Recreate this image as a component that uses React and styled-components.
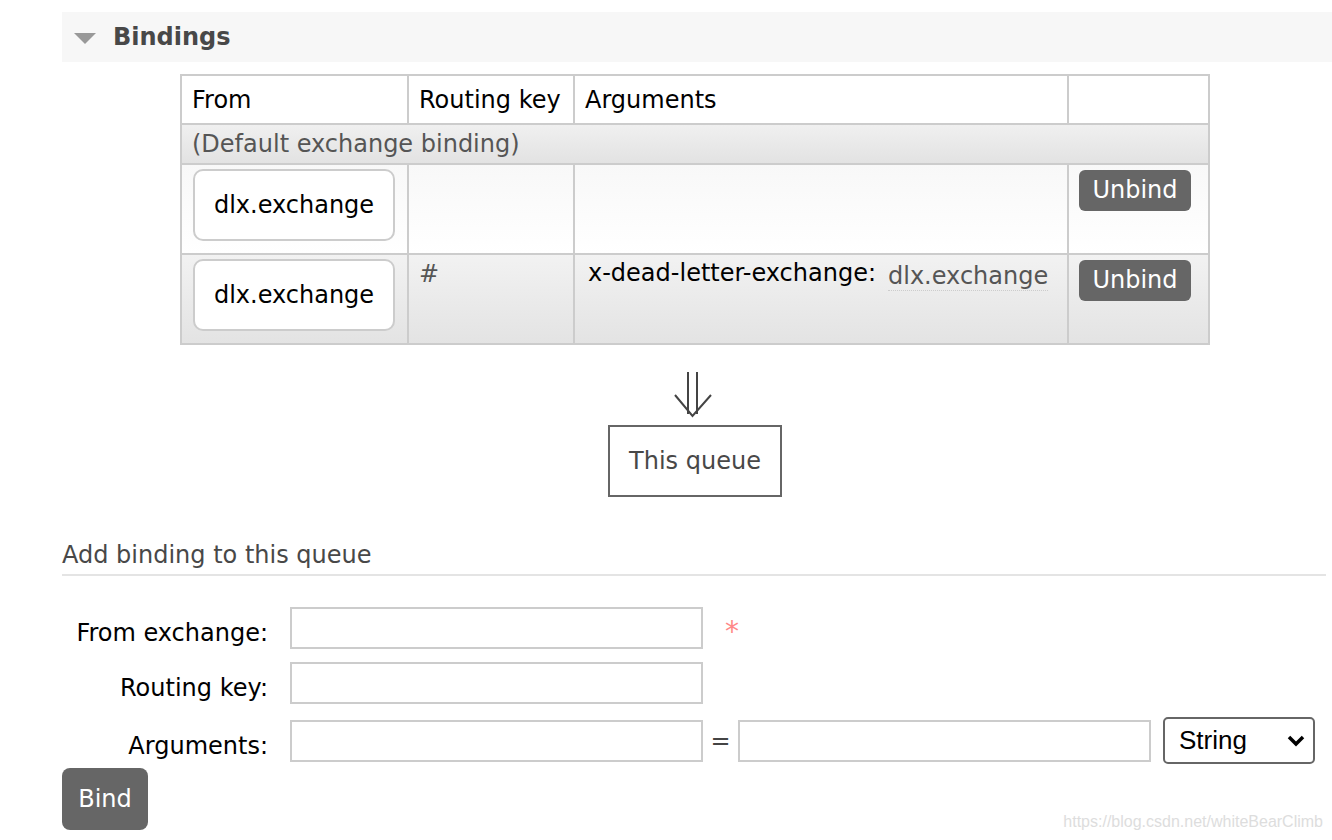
import styled, { createGlobalStyle } from "styled-components";

// global
const GlobalStyle = createGlobalStyle`
  body {
    margin: 0;
    background: #fff;
    font-family: "DejaVu Sans", Verdana, sans-serif;
    color: #000;
  }
`;

// style
const Page = styled.div`
  width: 1332px;
  height: 840px;
  padding: 12px 0 0 62px;
  box-sizing: border-box;
  position: relative;
  overflow: hidden;
`;

const SectionHeader = styled.div`
  height: 50px;
  background: #f7f7f7;
  display: flex;
  align-items: center;
  gap: 17px;
  padding-left: 12px;
  font-size: 24px;
  font-weight: bold;
  color: #484848;
`;

const Triangle = styled.span`
  width: 0;
  height: 0;
  border-left: 11px solid transparent;
  border-right: 11px solid transparent;
  border-top: 11px solid #999;
  margin-top: 2px;
`;

const Diagram = styled.div`
  width: 1030px;
  margin: 12px 0 0 118px;
  display: flex;
  flex-direction: column;
  align-items: center;
`;

const Table = styled.table`
  width: 100%;
  border-collapse: collapse;
  border: 2px solid #ccc;
  font-size: 24px;

  th,
  td {
    border: 2px solid #ccc;
    text-align: left;
    vertical-align: top;
    padding: 4px 10px;
  }

  th {
    font-weight: normal;
    height: 39px;
    vertical-align: middle;
    background: #fff;
  }
`;

const Row = styled.tr`
  background: ${(p) =>
    p.$alt
      ? "linear-gradient(#f2f2f2, #e3e3e3)"
      : "linear-gradient(#f8f8f8, #fff)"};

  td {
    height: 80px;
  }
`;

const DefaultRow = styled.tr`
  background: linear-gradient(#f0f0f0, #e2e2e2);

  td {
    height: 30px;
    padding: 4px 10px;
    color: #555;
    vertical-align: middle;
  }
`;

const ExchangeBox = styled.div`
  width: 198px;
  height: 68px;
  margin-left: 1px;
  border: 2px solid #ccc;
  border-radius: 10px;
  background: #fff;
  display: flex;
  align-items: center;
  justify-content: center;
`;

const Muted = styled.span`
  color: #555;
  display: inline-block;
  padding-top: 1px;
`;

const ArgKey = styled.span`
  display: inline-block;
  padding-left: 3px;
`;

const ArgValue = styled.span`
  color: #555;
  margin-left: 12px;
  border-bottom: 1px dotted #ccc;
  position: relative;
  top: 3px;
`;

const SmallButton = styled.button`
  background: #666;
  color: #fff;
  border: none;
  border-radius: 6px;
  font: inherit;
  font-size: 24px;
  width: 112px;
  height: 41px;
  padding: 0 0 2px;
  margin-top: 1px;
`;

const Arrow = styled.svg`
  margin-top: 27px;
  margin-left: -2px;
  display: block;
`;

const QueueBox = styled.div`
  margin-top: 7px;
  width: 170px;
  height: 68px;
  border: 2px solid #666;
  display: flex;
  align-items: center;
  justify-content: center;
  color: #484848;
  font-size: 24px;
`;

const SubHeading = styled.h3`
  margin: 44px 6px 0 0;
  font-size: 24px;
  font-weight: normal;
  color: #484848;
  padding-bottom: 5px;
  border-bottom: 2px solid #e4e4e4;
`;

const Form = styled.div`
  margin-top: 31px;
  display: grid;
  grid-template-columns: 206px auto;
  column-gap: 22px;
  row-gap: 13px;
  align-items: center;
  font-size: 24px;
`;

const Label = styled.label`
  text-align: right;
  padding-top: 10px;
`;

const Fields = styled.div`
  display: flex;
  align-items: center;
`;

const TextInput = styled.input`
  width: 413px;
  height: 42px;
  box-sizing: border-box;
  border: 2px solid #ccc;
  background: #fff;
  font: inherit;
`;

const Required = styled.span`
  color: #f88;
  margin-left: 22px;
  margin-top: 11px;
  font-size: 28px;
  line-height: 1;
  align-self: flex-start;
`;

const Equals = styled.span`
  color: #444;
  width: 35px;
  text-align: center;
`;

const Select = styled.div`
  margin-left: 12px;
  width: 152px;
  height: 47px;
  box-sizing: border-box;
  border: 2px solid #666;
  border-radius: 5px;
  display: flex;
  align-items: center;
  justify-content: space-between;
  padding: 0 7px 0 14px;
  font-family: "Liberation Sans", Arial, sans-serif;
  font-size: 26px;
`;

const BigButton = styled.button`
  margin-top: 4px;
  background: #666;
  color: #fff;
  border: none;
  border-radius: 8px;
  font: inherit;
  font-size: 24px;
  width: 86px;
  height: 62px;
`;

const Watermark = styled.div`
  position: absolute;
  right: 9px;
  bottom: 9px;
  font-family: "Liberation Sans", Arial, sans-serif;
  font-size: 16px;
  color: #ddd;
`;

const App = () => {
  const bindings = [
    { from: "dlx.exchange", key: "", args: null },
    { from: "dlx.exchange", key: "#", args: ["x-dead-letter-exchange:", "dlx.exchange"] },
  ];

  return (
    <>
      <GlobalStyle />
      <Page>
        {/* Bindings */}
        <SectionHeader>
          <Triangle />
          Bindings
        </SectionHeader>

        <Diagram>
          <Table>
            <colgroup>
              <col style={{ width: "227px" }} />
              <col style={{ width: "166px" }} />
              <col style={{ width: "494px" }} />
              <col />
            </colgroup>
            <thead>
              <tr>
                <th>From</th>
                <th>Routing key</th>
                <th>Arguments</th>
                <th></th>
              </tr>
            </thead>
            <tbody>
              <DefaultRow>
                <td colSpan={4}>(Default exchange binding)</td>
              </DefaultRow>
              {bindings.map((b, i) => (
                <Row key={i} $alt={i % 2 === 1}>
                  <td>
                    <ExchangeBox>{b.from}</ExchangeBox>
                  </td>
                  <td>
                    <Muted>{b.key}</Muted>
                  </td>
                  <td>
                    {b.args && (
                      <ArgKey>
                        {b.args[0]}
                        <ArgValue>{b.args[1]}</ArgValue>
                      </ArgKey>
                    )}
                  </td>
                  <td>
                    <SmallButton>Unbind</SmallButton>
                  </td>
                </Row>
              ))}
            </tbody>
          </Table>

          <Arrow width="40" height="46" viewBox="0 0 40 46">
            <g fill="none" stroke="#444" strokeWidth="2">
              <line x1="14" y1="0" x2="14" y2="42" />
              <line x1="23" y1="0" x2="23" y2="42" />
              <polyline points="1,23 18.5,44 37,23" />
            </g>
          </Arrow>
          <QueueBox>This queue</QueueBox>
        </Diagram>

        {/* Add binding */}
        <SubHeading>Add binding to this queue</SubHeading>
        <Form>
          <Label>From exchange:</Label>
          <Fields>
            <TextInput />
            <Required>*</Required>
          </Fields>
          <Label>Routing key:</Label>
          <Fields>
            <TextInput />
          </Fields>
          <Label>Arguments:</Label>
          <Fields>
            <TextInput />
            <Equals>=</Equals>
            <TextInput />
            <Select>
              String
              <svg width="20" height="14" viewBox="0 0 20 14">
                <polyline points="3,3 10,10 17,3" fill="none" stroke="#000" strokeWidth="3.5" />
              </svg>
            </Select>
          </Fields>
        </Form>
        <BigButton>Bind</BigButton>
        <Watermark>https://blog.csdn.net/whiteBearClimb</Watermark>
      </Page>
    </>
  );
};

export default App;
